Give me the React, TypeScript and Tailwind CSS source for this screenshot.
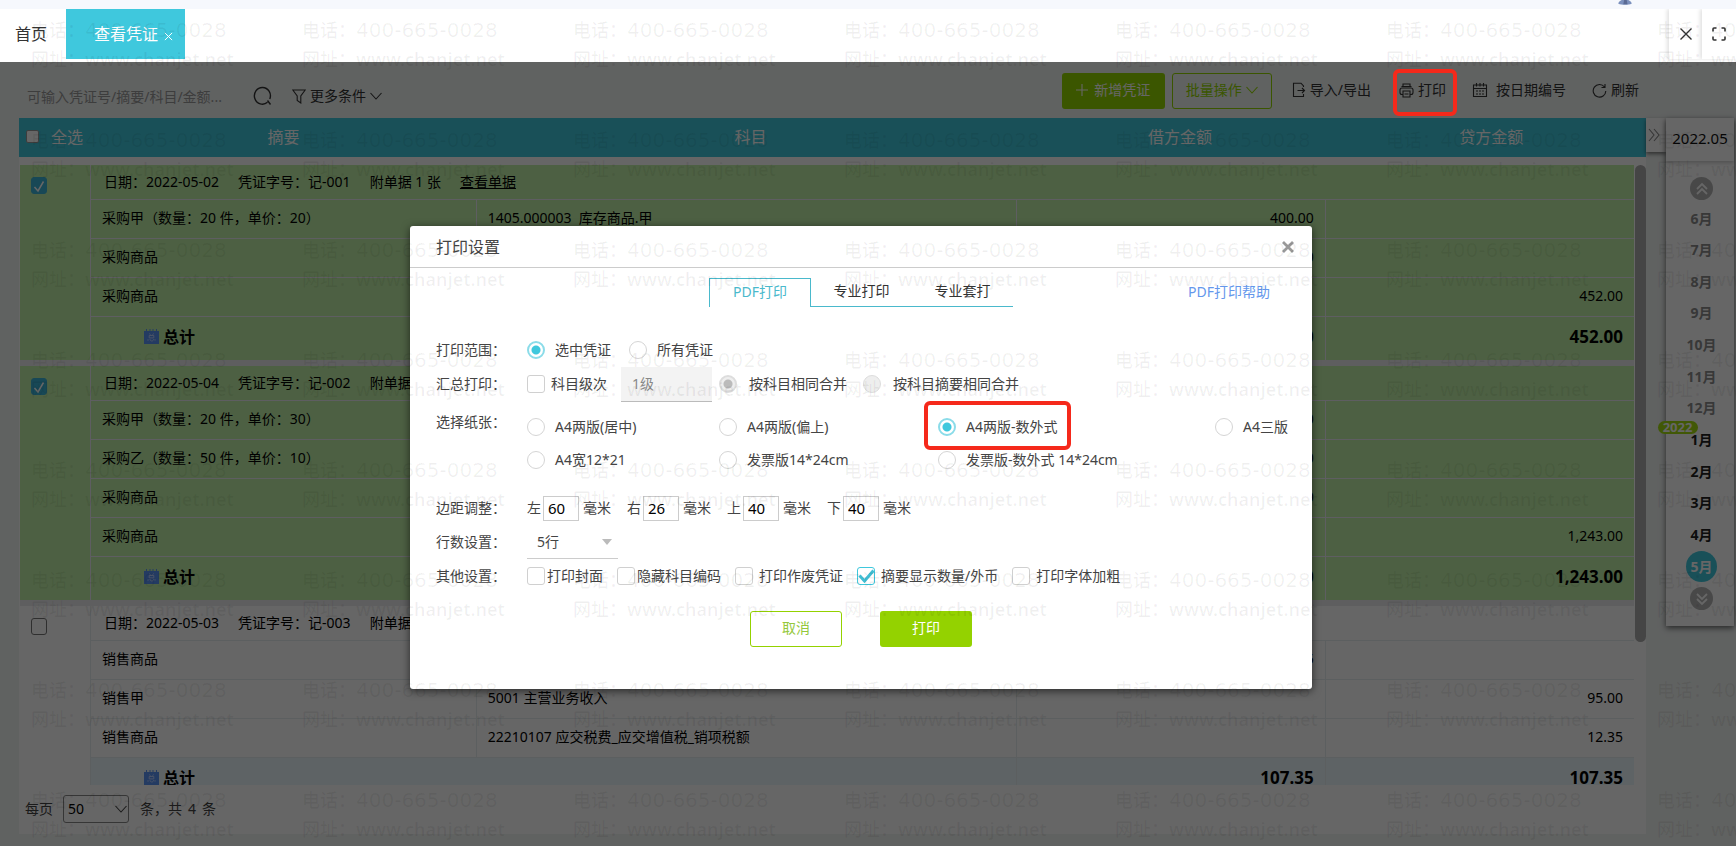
import React from "react";

type Line = { summary: string; account?: string; debit?: string; credit?: string };
type Voucher = {
  date: string;
  no: string;
  files: number;
  selected: boolean;
  lines: Line[];
  debit: string;
  credit: string;
};

const vouchers: Voucher[] = [
  {
    date: "2022-05-02",
    no: "记-001",
    files: 1,
    selected: true,
    lines: [
      { summary: "采购甲（数量：20 件，单价：20）", account: "1405.000003  库存商品.甲", debit: "400.00" },
      { summary: "采购商品", debit: "52.00" },
      { summary: "采购商品", credit: "452.00" },
    ],
    debit: "452.00",
    credit: "452.00",
  },
  {
    date: "2022-05-04",
    no: "记-002",
    files: 1,
    selected: true,
    lines: [
      { summary: "采购甲（数量：20 件，单价：30）", debit: "600.00" },
      { summary: "采购乙（数量：50 件，单价：10）", debit: "500.00" },
      { summary: "采购商品", debit: "143.00" },
      { summary: "采购商品", credit: "1,243.00" },
    ],
    debit: "1,243.00",
    credit: "1,243.00",
  },
  {
    date: "2022-05-03",
    no: "记-003",
    files: 1,
    selected: false,
    lines: [
      { summary: "销售商品", debit: "107.35" },
      { summary: "销售甲", account: "5001 主营业务收入", credit: "95.00" },
      { summary: "销售商品", account: "22210107 应交税费_应交增值税_销项税额", credit: "12.35" },
    ],
    debit: "107.35",
    credit: "107.35",
  },
];

const months = ["6月", "7月", "8月", "9月", "10月", "11月", "12月", "1月", "2月", "3月", "4月", "5月"];

type IconProps = { className?: string; children: React.ReactNode; box?: string; width?: number };
function Icon({ className = "", children, box = "0 0 16 16", width = 1.1 }: IconProps) {
  return (
    <svg viewBox={box} fill="none" stroke="currentColor" strokeWidth={width} className={"shrink-0 " + className} aria-hidden="true">
      {children}
    </svg>
  );
}

const ChevronDown = () => (
  <Icon className="h-3 w-3" box="0 0 12 12">
    <path d="M.5 3l5.500 6 5.500-6" />
  </Icon>
);

function TotalIcon() {
  return (
    <svg viewBox="0 0 15 15" className="h-[15px] w-[15px] shrink-0" aria-hidden="true">
      <path d="M0 2h2V0h1v2h2.500V0h1v2h2V0h1v2H12V0h1v2h2v13H0z" fill="#5b93f5" />
      <path d="M5.500 4.500l.8 1.300M9.500 4.500l-.8 1.300M5.200 6.500h4.600v2.400H5.200zM4 10.200v1.600M6 10.200c.2 2.400 3.400 2.400 3.600 0M11 10.200v1.400" stroke="#b9d0ff" strokeWidth="1" fill="none" />
    </svg>
  );
}

function Ring({ className }: { className: string }) {
  return <span aria-hidden="true" className={"pointer-events-none absolute z-20 rounded-md border-4 border-[#f5291b] " + className} />;
}

function TabBar() {
  return (
    <header>
      <div className="relative h-[9px] bg-[#f6f8fd]">
        <svg viewBox="0 0 16 6" className="absolute right-[103px] top-0 h-[5px] w-4" aria-hidden="true">
          <path d="M4 0h8c2 1 4 2.500 4 4.500C12 6 4 6 0 4.500 0 2.500 2 1 4 0z" fill="#7b90bd" />
          <path d="M7 0h3l1 5H6z" fill="#5a6a94" />
        </svg>
      </div>
      <nav className="flex h-[53px] bg-white">
        <a href="#home" className="flex h-[50px] w-[66px] items-center pl-[15px] text-base text-[#333]">首页</a>
        <div className="flex h-[50px] w-[119px] items-center bg-[#3fc8dd] pl-7 text-base text-white">
          <span>查看凭证</span>
          <button type="button" aria-label="关闭标签" className="ml-1.5 mt-1">
            <Icon className="h-[9px] w-[9px]" box="0 0 10 10">
              <path d="M1 1l8 8M9 1L1 9" />
            </Icon>
          </button>
        </div>
        <button type="button" aria-label="关闭" className="ml-auto flex h-[50px] w-[33px] items-center justify-center bg-white text-[#333] shadow-[-2px_0_4px_rgba(0,0,0,0.12)]">
          <Icon className="h-3 w-3" box="0 0 12 12" width={1.4}>
            <path d="M.5.5l11 11M11.500.5l-11 11" />
          </Icon>
        </button>
        <button type="button" aria-label="全屏" className="flex h-[50px] w-[34px] items-center justify-center bg-white text-[#333] shadow-[-2px_0_4px_rgba(0,0,0,0.12)]">
          <Icon className="h-[14px] w-[14px]" box="0 0 14 14" width={1.6}>
            <path d="M1 4.500V2a1 1 0 0 1 1-1h2.500M9.500 1H12a1 1 0 0 1 1 1v2.500M13 9.500V12a1 1 0 0 1-1 1H9.500M4.500 13H2a1 1 0 0 1-1-1V9.500" />
          </Icon>
        </button>
      </nav>
    </header>
  );
}

function Toolbar() {
  return (
    <div className="flex h-14 items-start pl-[25px] pr-[97px] text-sm text-[#333]">
      <div className="flex h-14 items-center pt-3">
        <input
          aria-label="搜索凭证"
          placeholder="可输入凭证号/摘要/科目/金额..."
          className="h-9 w-[228px] bg-transparent pl-0.5 placeholder:text-[#999]"
        />
        <button type="button" aria-label="搜索">
          <Icon className="h-5 w-[19px]" box="0 0 19 20" width={1.4}>
            <path d="M14.500 16.300A8 8.400 0 1 1 16.800 13M14.500 14.500l3 4" />
          </Icon>
        </button>
        <button type="button" className="ml-5 flex items-center">
          <Icon className="mr-1 h-[15px] w-[14px]" box="0 0 14 15">
            <path d="M.8 1h12.400L8.800 7v7L5.200 11.500V7z" />
          </Icon>
          更多条件
          <span className="ml-1"><ChevronDown /></span>
        </button>
      </div>
      <div className="ml-auto mt-[11px] flex h-9 items-center">
        <button type="button" className="flex h-9 w-[103px] items-center justify-center gap-1.5 rounded-[3px] bg-[#94d800] pb-0.5 text-white">
          <Icon className="h-3 w-3" box="0 0 12 12">
            <path d="M6 0v12M0 6h12" />
          </Icon>
          新增凭证
        </button>
        <button type="button" className="ml-[7px] flex h-9 w-[100px] items-center justify-center gap-1 rounded-[3px] border border-[#94d800] pb-0.5 text-[#94d800]">
          批量操作
          <ChevronDown />
        </button>
        <button type="button" className="ml-5 flex items-center gap-1 pb-0.5">
          <Icon className="h-4 w-[14px]" box="0 0 14 16">
            <path d="M11.500 5V4L9 1.200H1.500v13.300h10V12M5.500 8.500h7M10 6l2.500 2.500L10 11" />
          </Icon>
          导入/导出
        </button>
        <div className="relative ml-7 pb-0.5">
          <button type="button" className="flex items-center gap-1">
            <Icon className="h-[15px] w-[15px]" box="0 0 15 15">
              <path d="M4 3.500V1h7v2.500M3.500 11.500H3a2 2 0 0 1-2-2V7a2 2 0 0 1 2-2h9a2 2 0 0 1 2 2v2.500a2 2 0 0 1-2 2h-.5M2.500 3.500h10M4 8h7v6H4zM5.500 11h4" />
            </Icon>
            打印
          </button>
          <Ring className="-left-1.5 -right-[11px] -top-[11px] h-[47px]" />
        </div>
        <button type="button" className="ml-[26px] flex items-center gap-2 pb-0.5">
          <Icon className="h-4 w-4" box="0 0 16 16">
            <path d="M1.500 3h13v11.500h-13zM1.500 6.500h13M4.500 1v3.500M8 1v3.500M11.500 1v3.500M4 9h2M7 9h2M10 9h2M4 12h2M7 12h2M10 12h2" />
          </Icon>
          按日期编号
        </button>
        <button type="button" className="ml-[26px] flex items-center gap-1 pb-0.5">
          <Icon className="h-[15px] w-[15px]" box="0 0 15 15">
            <path d="M12.500 4A6.300 6.300 0 1 0 13.800 8M13 1v3.500H9.500" />
          </Icon>
          刷新
        </button>
      </div>
    </div>
  );
}

const cellLine = "border-l border-t border-[#ececf2] group-data-[on=false]:border-[#e6eef0]";
const lineCell = "h-[39px] pb-[3px] " + cellLine;

function VoucherBody({ v }: { v: Voucher }) {
  return (
    <>
      <tbody data-on={v.selected} className="group bg-white data-[on=true]:bg-[#c1f0a8]">
        <tr>
          <td rowSpan={v.lines.length + 2} className="align-top pl-[11px] pt-3">
            <span className="grid h-[17px] w-4">
              <input
                type="checkbox"
                aria-label={"选择 " + v.no}
                defaultChecked={v.selected}
                className="col-start-1 row-start-1 h-[17px] w-4 appearance-none rounded-[3px] border border-[#777] bg-white checked:border-[#3eb5d6] checked:bg-[#3eb5d6]"
              />
              {v.selected && (
                <svg viewBox="0 0 16 17" className="pointer-events-none col-start-1 row-start-1 h-[17px] w-4" aria-hidden="true">
                  <path d="M3.500 10l3.500 4 5.500-9.500" fill="none" stroke="#fff" strokeWidth="1.500" />
                </svg>
              )}
            </span>
          </td>
          <td colSpan={4} className="h-[34px] border-l border-[#ececf2] pl-[13px] group-data-[on=false]:border-[#e6eef0]">
            <span className="flex gap-[19px]">
              <span>日期：{v.date}</span>
              <span>凭证字号：{v.no}</span>
              <span>附单据 {v.files} 张</span>
              <a href="#bill" className="underline">查看单据</a>
            </span>
          </td>
        </tr>
        {v.lines.map((l, i) => (
          <tr key={i}>
            <td className={lineCell + " pl-[11px]"}>{l.summary}</td>
            <td className={lineCell + " whitespace-pre pl-[11px]"}>{l.account}</td>
            <td className={lineCell + " pr-[11px] text-right"}>{l.debit}</td>
            <td className={lineCell + " pr-[11px] text-right"}>{l.credit}</td>
          </tr>
        ))}
        <tr className="font-bold group-data-[on=false]:bg-[#ebf7fc]">
          <td colSpan={2} className={"h-11 pb-1 pl-[53px] text-base " + cellLine}>
            <span className="flex items-center gap-1"><TotalIcon />总计</span>
          </td>
          <td className={"pb-0.5 pr-[11px] text-right text-[17px] " + cellLine}>{v.debit}</td>
          <td className={"pb-0.5 pr-[11px] text-right text-[17px] " + cellLine}>{v.credit}</td>
        </tr>
      </tbody>
      <tbody aria-hidden="true">
        <tr><td colSpan={5} className="h-1.5 bg-[#eaeaee]" /></tr>
      </tbody>
    </>
  );
}

function VoucherPanel() {
  return (
    <main className="flex min-w-0 flex-1 flex-col bg-white">
      <table className="w-full table-fixed bg-[#3fc8dd] text-base text-white">
        <colgroup>
          <col className="w-[71px]" />
          <col className="w-[23.800%]" />
          <col className="w-[33.600%]" />
          <col className="w-[19.200%]" />
          <col />
        </colgroup>
        <thead>
          <tr className="h-[39px]">
            <th className="whitespace-nowrap pb-0.5 pl-[7px] text-left font-normal">
              <label className="flex items-center">
                <input type="checkbox" className="mr-3 h-[13px] w-[13px] appearance-none rounded-[2px] border border-[#999] bg-white" />
                全选
              </label>
            </th>
            <th className="pb-0.5 font-normal">摘要</th>
            <th className="pb-0.5 font-normal">科目</th>
            <th className="pb-0.5 font-normal">借方金额</th>
            <th className="pb-0.5 font-normal">贷方金额</th>
          </tr>
        </thead>
      </table>
      <div className="flex min-h-0 flex-1 pl-px pt-2">
        <div className="min-h-0 flex-1 overflow-hidden">
          <table className="w-full table-fixed border-separate border-spacing-0 text-sm text-black">
            <colgroup>
              <col className="w-[70px]" />
              <col className="w-[23.900%]" />
              <col className="w-[33.500%]" />
              <col className="w-[19.100%]" />
              <col />
            </colgroup>
            {vouchers.map((v) => <VoucherBody key={v.no} v={v} />)}
          </table>
        </div>
        <div aria-hidden="true" className="ml-px w-[11px]">
          <div className="h-[77%] rounded-full bg-[#acacac]" />
        </div>
      </div>
      <footer className="flex h-[49px] items-center pb-0.5 pl-1.5 text-sm text-[#444]">
        <label className="flex items-center gap-2.5">
          每页
          <span className="relative flex items-center">
            <select defaultValue="50" className="h-7 w-[66px] appearance-none rounded-[3px] border border-[#888] bg-white pl-1 text-black">
              <option value="50">50</option>
            </select>
            <span className="pointer-events-none absolute right-0.5 top-2"><ChevronDown /></span>
          </span>
        </label>
        <span className="ml-[11px]">条，共<span className="px-1.5">4</span>条</span>
      </footer>
    </main>
  );
}

function DateRail() {
  return (
    <aside className="flex w-[90px] shrink-0 items-start">
      <button type="button" aria-label="收起" className="flex h-[34px] w-5 items-center bg-white pl-px text-[#888] shadow-[0_2px_4px_rgba(0,0,0,0.5)]">
        <Icon className="h-3.5 w-3.5" box="0 0 14 14">
          <path d="M2 1l5 6-5 6M7 1l5 6-5 6" />
        </Icon>
      </button>
      <div className="mr-0.5 flex-1 bg-white shadow-[0_2px_6px_rgba(0,0,0,0.6)]">
        <div className="flex h-[43px] items-center justify-center pb-0.5 text-[15px] text-[#111] shadow-[0_2px_4px_rgba(0,0,0,0.2)]">2022.05</div>
        <div className="flex flex-col items-center pb-4 pl-[3px] pt-4">
          <button type="button" aria-label="上移" className="flex h-[23px] w-[23px] items-center justify-center rounded-full bg-[#b4b4b4] text-white">
            <Icon className="h-3.5 w-3.5" box="0 0 14 14" width={1.800}>
              <path d="M2 7l5-5 5 5M2 12l5-5 5 5" />
            </Icon>
          </button>
          <ol className="mt-[3px] grid h-[380px] w-full justify-items-center text-sm font-bold">
            {months.map((m, i) => (
              <li key={m} className="relative flex h-[31px] items-center">
                {i === 7 && (
                  <span className="absolute -top-1 right-[15px] flex h-[13px] w-10 items-center justify-center rounded-full bg-[#a4dc10] text-[13px] leading-none text-white">2022</span>
                )}
                {i < 7 && <span className="text-[#8c8c8c]">{m}</span>}
                {i >= 7 && i < 11 && <span className="text-[#222]">{m}</span>}
                {i === 11 && (
                  <span className="flex h-[31px] w-[31px] items-center justify-center rounded-full bg-[#3fc8dd] text-white">{m}</span>
                )}
              </li>
            ))}
          </ol>
          <button type="button" aria-label="下移" className="mt-1 flex h-[23px] w-[23px] items-center justify-center rounded-full bg-[#b4b4b4] text-white">
            <Icon className="h-3.5 w-3.5" box="0 0 14 14" width={1.800}>
              <path d="M2 2l5 5 5-5M2 7l5 5 5-5" />
            </Icon>
          </button>
        </div>
      </div>
    </aside>
  );
}

type RadioProps = { name: string; label: string; checked?: boolean; disabled?: boolean; gap?: string };
function Radio({ name, label, checked, disabled, gap = "gap-2.5" }: RadioProps) {
  return (
    <label className={"flex items-center whitespace-nowrap " + gap}>
      <input
        type="radio"
        name={name}
        defaultChecked={checked}
        disabled={disabled}
        className="h-[18px] w-[18px] shrink-0 appearance-none rounded-full border border-[#d5d5d5] bg-white checked:border-2 checked:border-[#8bdce9] checked:bg-[radial-gradient(circle,#3fc8dd_4px,transparent_5px)] disabled:border-[#ddd] disabled:bg-[#eee] disabled:checked:border-[#ddd] disabled:checked:bg-[radial-gradient(circle,#bbb_4px,transparent_5px)]"
      />
      {label}
    </label>
  );
}

function Check({ label, checked, gap }: { label: string; checked?: boolean; gap: string }) {
  return (
    <label className={"flex items-center whitespace-nowrap " + gap}>
      <span className="grid h-[18px] w-[18px] shrink-0">
        <input
          type="checkbox"
          defaultChecked={checked}
          className="col-start-1 row-start-1 h-[18px] w-[18px] appearance-none rounded-[3px] border border-[#d0d0d0] bg-white checked:border-[#3fc8dd]"
        />
        {checked && (
          <svg viewBox="0 0 18 18" className="pointer-events-none col-start-1 row-start-1 h-[18px] w-[18px]" aria-hidden="true">
            <path d="M2.500 8.500l5 5.500 9-10.500" fill="none" stroke="#3fbdd3" strokeWidth="3" />
          </svg>
        )}
      </span>
      {label}
    </label>
  );
}

function Row({ title, children, className = "h-[34px]" }: { title: string; children: React.ReactNode; className?: string }) {
  return (
    <div className={"flex items-center " + className}>
      <span className="w-[91px] shrink-0">{title}：</span>
      {children}
    </div>
  );
}

const margins: [string, string][] = [["左", "60"], ["右", "26"], ["上", "40"], ["下", "40"]];

function PrintDialog() {
  return (
    <section role="dialog" aria-label="打印设置" className="w-[902px] rounded-[3px] bg-white text-sm text-[#444] shadow-[0_2px_8px_rgba(0,0,0,0.6)]">
      <div className="flex h-[42px] items-center justify-between border-b border-[#ccc] pl-[26px] pr-[18px]">
        <h2 className="text-base">打印设置</h2>
        <button type="button" aria-label="关闭" className="text-[#999]">
          <Icon className="h-3 w-3" box="0 0 12 12" width={2.800}>
            <path d="M1 1l10 10M11 1L1 11" />
          </Icon>
        </button>
      </div>
      <div className="flex h-[65px] items-start pl-[299px] pr-[42px] pt-2.5">
        <div role="tablist" className="flex text-[#333]">
          <button type="button" role="tab" aria-selected="true" className="h-[29px] w-[102px] border border-b-0 border-[#4ab9cc] pb-0.5 text-[#4ab9cc]">PDF打印</button>
          <button type="button" role="tab" aria-selected="false" className="h-[29px] w-[101px] border-b border-[#4ab9cc] pb-0.5">专业打印</button>
          <button type="button" role="tab" aria-selected="false" className="h-[29px] w-[101px] border-b border-[#4ab9cc] pb-0.5">专业套打</button>
        </div>
        <a href="#help" className="ml-auto mt-1 text-[#6497ec]">PDF打印帮助</a>
      </div>
      <div className="pl-[26px]">
        <Row title="打印范围">
          <div className="flex gap-[18px]">
            <Radio name="range" label="选中凭证" checked />
            <Radio name="range" label="所有凭证" />
          </div>
        </Row>
        <Row title="汇总打印">
          <Check label="科目级次" gap="gap-1.5" />
          <select aria-label="级次" disabled className="ml-3.5 mr-[7px] h-[35px] w-[91px] appearance-none border-b border-[#bbb] bg-[#f3f3f3] pl-[11px] text-[#888] opacity-100">
            <option>1级</option>
          </select>
          <div className="flex gap-4">
            <Radio name="merge" label="按科目相同合并" checked disabled gap="gap-3" />
            <Radio name="merge" label="按科目摘要相同合并" disabled gap="gap-3" />
          </div>
        </Row>
        <div className="flex pt-[9px]">
          <span className="h-6 w-[91px] shrink-0 leading-6">选择纸张：</span>
          <div className="grid flex-1 auto-rows-[33px] grid-cols-[192px_219px_277px_auto] items-center">
            <Radio name="paper" label="A4两版(居中)" />
            <Radio name="paper" label="A4两版(偏上)" />
            <div className="relative justify-self-start">
              <Radio name="paper" label="A4两版-数外式" checked />
              <Ring className="-left-3.5 -right-3.5 -top-4 h-[49px]" />
            </div>
            <Radio name="paper" label="A4三版" />
            <Radio name="paper" label="A4宽12*21" />
            <Radio name="paper" label="发票版14*24cm" />
            <Radio name="paper" label="发票版-数外式 14*24cm" />
          </div>
        </div>
        <Row title="边距调整" className="mt-[15px] h-[34px]">
          {margins.map(([side, value]) => (
            <label key={side} className="flex w-[100px] items-center">
              {side}
              <input defaultValue={value} className="mx-0.5 h-[25px] w-9 border border-[#ccc] pl-1 text-[15px] text-black" />
              <span className="pl-0.5">毫米</span>
            </label>
          ))}
        </Row>
        <Row title="行数设置">
          <span className="relative">
            <select aria-label="行数设置" className="h-[34px] w-[91px] appearance-none border-b border-[#ccc] bg-transparent pl-2.5">
              <option>5行</option>
            </select>
            <svg viewBox="0 0 10 6" className="pointer-events-none absolute right-1.5 top-3.5 h-1.5 w-2.5" aria-hidden="true">
              <path d="M0 0h10L5 6z" fill="#bbb" />
            </svg>
          </span>
        </Row>
        <Row title="其他设置">
          <div className="flex gap-3.5">
            <Check label="打印封面" gap="gap-0.5" />
            <Check label="隐藏科目编码" gap="gap-0.5" />
            <Check label="打印作废凭证" gap="gap-1.5" />
            <Check label="摘要显示数量/外币" checked gap="gap-1.5" />
            <Check label="打印字体加粗" gap="gap-1.5" />
          </div>
        </Row>
      </div>
      <div className="flex justify-center gap-[38px] pb-[42px] pt-[18px]">
        <button type="button" className="h-9 w-[92px] rounded-[3px] border border-[#94d200] pb-0.5 text-[#94c83c]">取消</button>
        <button type="button" className="h-9 w-[92px] rounded-[3px] bg-[#94d200] pb-0.5 text-white">打印</button>
      </div>
    </section>
  );
}

function Watermark() {
  return (
    <div aria-hidden="true" className="pointer-events-none absolute inset-0 z-30 overflow-hidden pl-[31px] pt-4 text-lg leading-[29px] text-black/6">
      <div className="grid auto-rows-[110px] grid-cols-[repeat(7,271px)] font-medium">
        {Array.from({ length: 56 }, (_, i) => (
          <div key={i} className="whitespace-nowrap">
            <div className="flex h-[29px]">电话：<span className="font-['DejaVu_Sans','Noto_Sans_CJK_SC',sans-serif] text-xl leading-[29px]">400-665-0028</span></div>
            <div>网址：<span className="font-semibold">www.chanjet.net</span></div>
          </div>
        ))}
      </div>
    </div>
  );
}

export default function App() {
  return (
    <div className="relative flex h-screen flex-col overflow-hidden bg-[#f0f4f3] font-['Noto_Sans','Noto_Sans_CJK_SC',sans-serif]">
      <TabBar />
      <div className="relative flex min-h-0 flex-1 flex-col">
        <Toolbar />
        <div className="flex min-h-0 flex-1 pb-3 pl-[19px]">
          <VoucherPanel />
          <DateRail />
        </div>
        <div className="absolute inset-0 z-10 flex items-center justify-center bg-black/60 pr-3.5 pt-[7px]">
          <PrintDialog />
        </div>
      </div>
      <Watermark />
    </div>
  );
}
